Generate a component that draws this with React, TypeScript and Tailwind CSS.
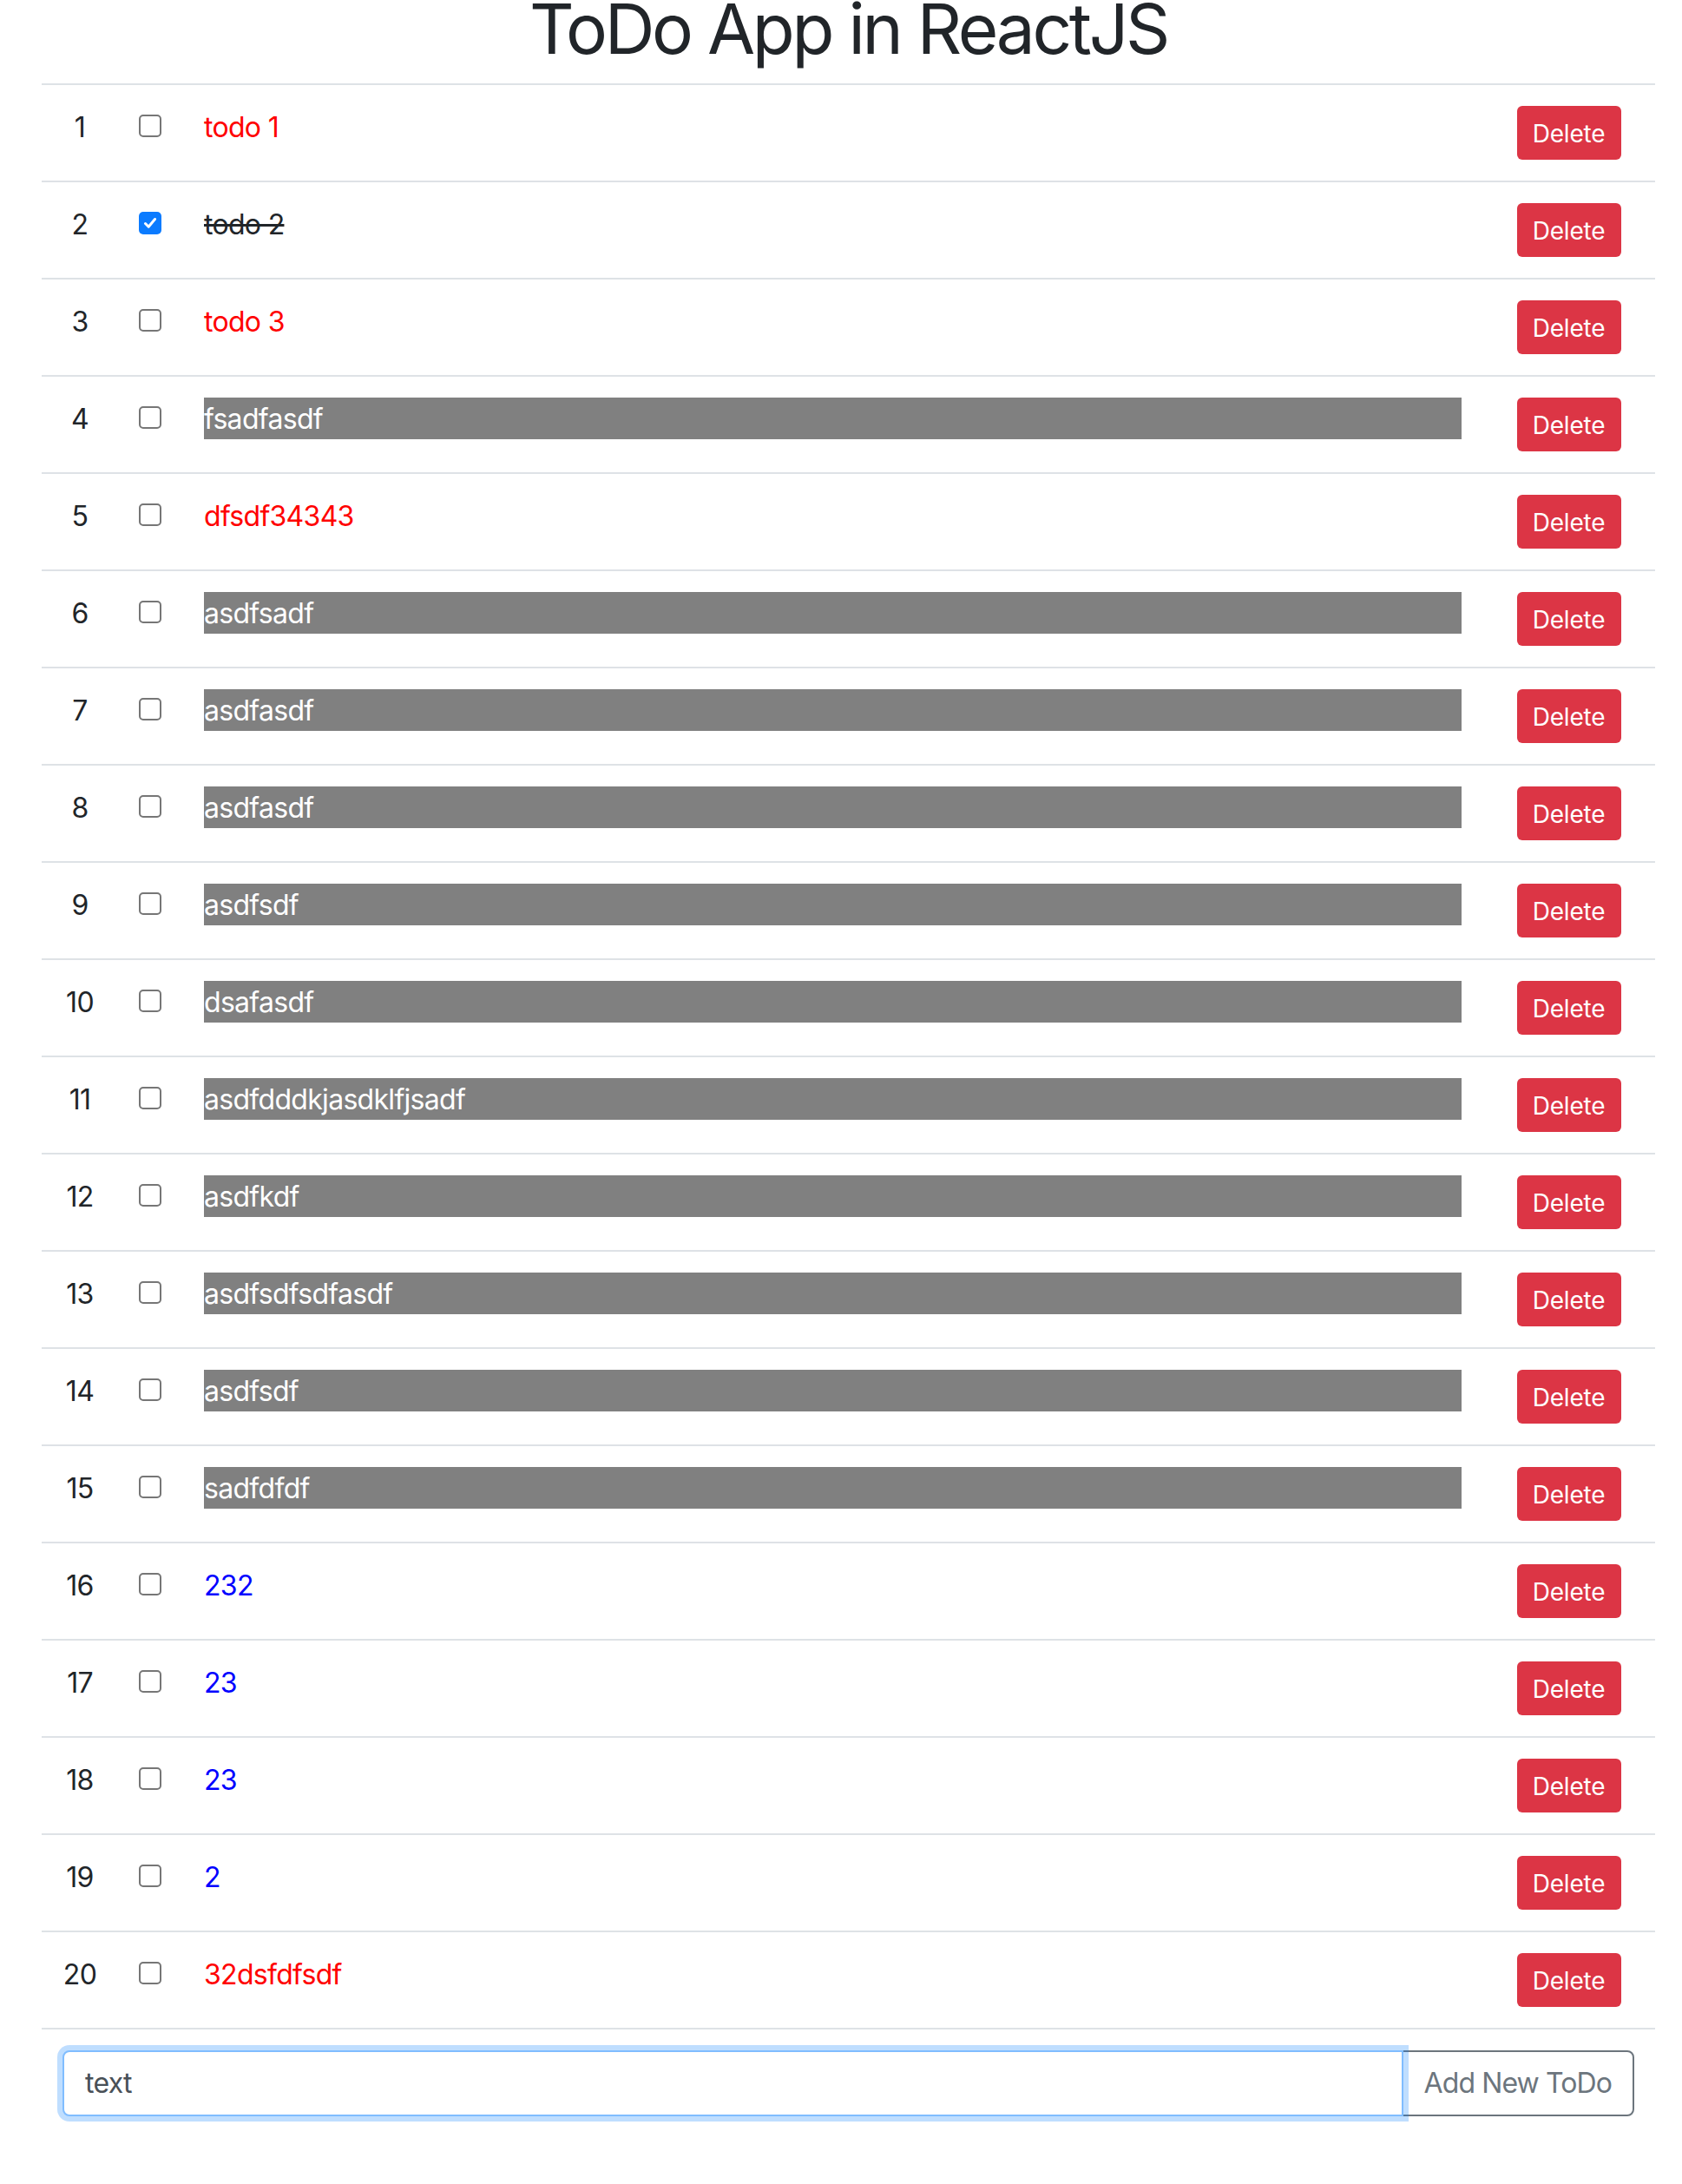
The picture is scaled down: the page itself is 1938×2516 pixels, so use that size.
import React from 'react';

type Kind = 'red' | 'done' | 'gray' | 'blue';

interface Todo {
  text: string;
  kind: Kind;
}

const TODOS: Todo[] = [
  { text: 'todo 1', kind: 'red' },
  { text: 'todo 2', kind: 'done' },
  { text: 'todo 3', kind: 'red' },
  { text: 'fsadfasdf', kind: 'gray' },
  { text: 'dfsdf34343', kind: 'red' },
  { text: 'asdfsadf', kind: 'gray' },
  { text: 'asdfasdf', kind: 'gray' },
  { text: 'asdfasdf', kind: 'gray' },
  { text: 'asdfsdf', kind: 'gray' },
  { text: 'dsafasdf', kind: 'gray' },
  { text: 'asdfdddkjasdklfjsadf', kind: 'gray' },
  { text: 'asdfkdf', kind: 'gray' },
  { text: 'asdfsdfsdfasdf', kind: 'gray' },
  { text: 'asdfsdf', kind: 'gray' },
  { text: 'sadfdfdf', kind: 'gray' },
  { text: '232', kind: 'blue' },
  { text: '23', kind: 'blue' },
  { text: '23', kind: 'blue' },
  { text: '2', kind: 'blue' },
  { text: '32dsfdfsdf', kind: 'red' },
];

const TEXT_CLASS: Record<Kind, string> = {
  red: 'text-[#ff0000]',
  done: 'text-[#212529] line-through',
  gray: 'bg-[#808080] text-white',
  blue: 'text-[#0000ff]',
};

function Checkbox({ checked }: { checked: boolean }) {
  if (checked) {
    return (
      <span className="mt-[10px] flex h-[26px] w-[26px] items-center justify-center rounded-[5px] bg-[#0b7bff]">
        <svg width="18" height="18" viewBox="0 0 18 18" fill="none">
          <path
            d="M3.5 9.5 L7.2 13.2 L14.5 4.5"
            stroke="white"
            strokeWidth="3"
            strokeLinecap="round"
            strokeLinejoin="round"
          />
        </svg>
      </span>
    );
  }
  return (
    <span className="mt-[10px] block h-[26px] w-[26px] rounded-[5px] border-2 border-[#767676] bg-white" />
  );
}

function TodoRow({ index, todo }: { index: number; todo: Todo }) {
  return (
    <div className="flex border-t-2 border-[#dee2e6]">
      {/* number */}
      <div className="w-[88px] shrink-0 px-[24px] pb-[23px] pt-[25px] text-center leading-[48px] text-[#212529]">
        {index}
      </div>

      {/* checkbox */}
      <div className="w-[75px] shrink-0 py-[24px] pl-[24px]">
        <Checkbox checked={todo.kind === 'done'} />
      </div>

      {/* text */}
      <div className="min-w-0 flex-1 p-[24px]">
        <div className={`pt-[1px] leading-[47px] ${TEXT_CLASS[todo.kind]}`}>{todo.text}</div>
      </div>

      {/* delete */}
      <div className="flex w-[199px] shrink-0 justify-center p-[24px]">
        <button className="flex h-[62px] w-[120px] items-center justify-center rounded-[6px] bg-[#dc3545] pt-[2px] text-[28px] leading-[42px] tracking-[-0.2px] text-white">
          Delete
        </button>
      </div>
    </div>
  );
}

export default function App() {
  return (
    <div
      className="min-h-[2516px] bg-white text-[32px] tracking-[-0.7px] text-[#212529]"
      style={{ fontFamily: 'Inter, "Liberation Sans", Arial, sans-serif' }}
    >
      <div className="ml-[48px] mr-[31px]">
        <h1 className="-mt-[15px] mb-[15px] text-center text-[80px] font-normal leading-[96px] tracking-[-3.3px] text-[#212529]">
          ToDo App in ReactJS
        </h1>

        <div>
          {TODOS.map((todo, i) => (
            <TodoRow key={i} index={i + 1} todo={todo} />
          ))}

          {/* add new row */}
          <div className="border-t-2 border-[#dee2e6] p-[24px]">
            <div className="flex">
              <div className="relative z-10 flex h-[76px] flex-1 items-center rounded-l-[8px] border-2 border-[#80bdff] bg-white px-[24px] text-[#495057] shadow-[0_0_0_6px_rgba(0,123,255,0.25)]">
                text
              </div>
              <button className="-ml-[2px] h-[76px] rounded-r-[8px] border-2 border-[#6c757d] bg-white px-[24px] text-[32px] tracking-[-0.9px] text-[#6c757d]">
                Add New ToDo
              </button>
            </div>
          </div>
        </div>
      </div>
    </div>
  );
}
